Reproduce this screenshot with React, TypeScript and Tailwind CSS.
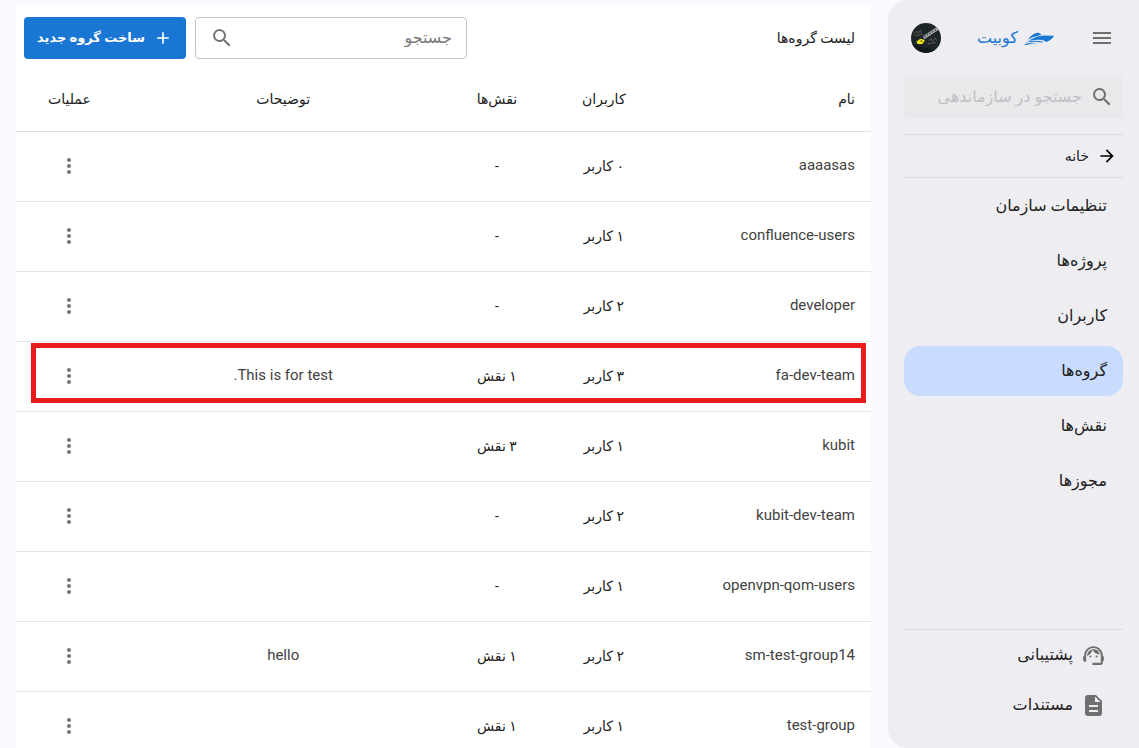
import {useState} from "react";
import {MdAdd, MdArrowForward, MdMenu, MdMoreVert, MdSearch, MdSupportAgent} from "react-icons/md";

interface Group {
  name: string;
  users: string;
  roles: string;
  description: string;
}

const groups: Group[] = [
  { name: "aaaasas", users: "۰ کاربر", roles: "-", description: "" },
  { name: "confluence-users", users: "۱ کاربر", roles: "-", description: "" },
  { name: "developer", users: "۲ کاربر", roles: "-", description: "" },
  { name: "fa-dev-team", users: "۳ کاربر", roles: "۱ نقش", description: "This is for test." },
  { name: "kubit", users: "۱ کاربر", roles: "۳ نقش", description: "" },
  { name: "kubit-dev-team", users: "۲ کاربر", roles: "-", description: "" },
  { name: "openvpn-qom-users", users: "۱ کاربر", roles: "-", description: "" },
  { name: "sm-test-group14", users: "۲ کاربر", roles: "۱ نقش", description: "hello" },
  { name: "test-group", users: "۱ کاربر", roles: "۱ نقش", description: "" },
];

const navItems = ["تنظیمات سازمان", "پروژه‌ها", "کاربران", "گروه‌ها", "نقش‌ها", "مجوزها"];

function BoatLogo() {
  return (
    <svg viewBox="0 0 88 38" className="w-[30px] h-[13px]" fill="#1976d2" aria-hidden="true">
      <path d="M11 23C17 13 24 8 32 4c8-3 13-2 19 4l-9 3C30 13 20 17 11 23z" />
      <path d="M13 26C27 16 44 11 58 10l30 1c-4 8-11 14-22 18-6-4-13-6-22-6-11 0-21 1-31 3z" />
      <path d="M3 31c16-6 35-7 56-2l-7 2C36 27 20 28 3 31z" />
      <path d="M0 37c13-6 28-7 42-4-14 0-22 1-31 4-4 1-8 1-11 0z" />
    </svg>
  );
}

function DocumentIcon() {
  return (
    <svg viewBox="0 0 25 25" className="size-[25px] text-[#6f6f6f]" fill="currentColor" fillRule="evenodd" aria-hidden="true">
      <path d="M7 2h8l6 6v12a3 3 0 0 1-3 3H7a3 3 0 0 1-3-3V5a3 3 0 0 1 3-3zM14 3.500V9h5.500zM8 12v2h9v-2zM8 17v2h9v-2z" />
    </svg>
  );
}

function Avatar() {
  return (
    <svg viewBox="0 0 90 90" className="size-[30px] rounded-full" role="img" aria-label="پروفایل">
      <rect width="90" height="90" fill="#1e2528" />
      <path d="M0 62L90 88V90H0z" fill="#14191b" />
      <path d="M36 40L78 12l5 8-43 29z" fill="#aeb2b4" />
      <path d="M40 42l40-25" stroke="#3a4144" strokeWidth="4" strokeDasharray="5 4" />
      <path d="M16 56l12-9 14 4-8 12H20z" fill="#f3ea12" />
      <path d="M25 55l6-4 5 3-5 4z" fill="#8c8a15" />
      <path d="M8 32l10-8 3 7 8-10 2 10M12 38l24-5M52 52l9-5 3 8 9-10 4 8M50 62l26-4" fill="none" stroke="#5e5555" strokeWidth="3" />
    </svg>
  );
}

function Sidebar() {
  const [active, setActive] = useState("گروه‌ها");

  return (
    <aside className="flex w-[251px] shrink-0 flex-col rounded-l-[20px] bg-[#eeedf2] px-4 pb-[18px]">
      <div className="flex h-[76px] items-center justify-between pr-[9px] pl-[7px]">
        <button type="button" aria-label="منو" className="text-[#6f6f6f]"><MdMenu size={24} /></button>
        <a href="#" className="flex items-center gap-1.5 text-base text-[#1976d2]">
          <BoatLogo />
          کوبیت
        </a>
        <Avatar />
      </div>

      <div className="flex h-[42px] items-center gap-2 rounded bg-[#e9e9eb] px-[9px]">
        <MdSearch size={24} className="shrink-0 text-[#6f6f6f]" />
        <input
          type="text"
          aria-label="جستجو در سازماندهی"
          placeholder="جستجو در سازماندهی"
          className="w-full min-w-0 bg-transparent text-base outline-none placeholder:text-[#c0c0c3]"
        />
      </div>

      <a href="#" className="mt-4 flex h-11 items-center gap-2 border-y border-[#d9d8de] px-1.5 text-sm text-[#212121]">
        <MdArrowForward size={20} className="text-black" />
        خانه
      </a>

      <nav className="mt-[3px] flex flex-col gap-[5px]">
        {navItems.map((item) => (
          <a
            key={item}
            href="#"
            onClick={() => setActive(item)}
            className={`flex h-[50px] items-center rounded-2xl px-4 text-base text-[#212121] ${active === item ? "bg-[#c9dbff]" : ""}`}
          >
            {item}
          </a>
        ))}
      </nav>

      {/* Bottom links */}
      <div className="mt-auto border-t border-[#d9d8de] text-base text-[#212121]">
        <a href="#" className="flex h-[50px] items-center gap-2 px-[17px]">
          <MdSupportAgent size={25} className="text-[#6f6f6f]" />
          پشتیبانی
        </a>
        <a href="#" className="flex h-[50px] items-center gap-2 px-[17px]">
          <DocumentIcon />
          مستندات
        </a>
      </div>
    </aside>
  );
}

function GroupRow({ group, highlighted }: { group: Group; highlighted: boolean }) {
  return (
    <tr className="relative h-[70px] border-b border-[#e4e4e4]">
      <td className="px-4 text-right text-[15px] text-[#424242]">
        {group.name}
        {highlighted && (
          <span className="pointer-events-none absolute top-[2px] right-[5px] bottom-[7px] left-[15px] border-[5px] border-[#e81c1c]" />
        )}
      </td>
      <td>{group.users}</td>
      <td>{group.roles}</td>
      <td className="text-[15px] text-[#424242]">{group.description}</td>
      <td>
        <button type="button" aria-label="عملیات" className="align-middle text-[#757575]"><MdMoreVert size={24} /></button>
      </td>
    </tr>
  );
}

function App() {
  const [selected] = useState("fa-dev-team");

  return (
    <div dir="rtl" className="flex h-screen overflow-hidden bg-[#f9f9fe] font-[Roboto,'DejaVu_Sans',sans-serif]">
      <Sidebar />
      <main className="min-w-0 flex-1 pt-[5px] pr-[17px] pl-4">
        <div className="rounded bg-white">
          <div className="flex items-center gap-[9px] pt-3 pr-4 pl-2">
            <h1 className="ml-auto text-sm text-[#212121]">لیست گروه‌ها</h1>
            <div className="flex h-[42px] w-[272px] items-center rounded border border-[#c4c4c4] px-3.5">
              <input
                type="text"
                aria-label="جستجو"
                placeholder="جستجو"
                className="w-full min-w-0 bg-transparent text-base outline-none placeholder:text-[#7a7a7a]"
              />
              <MdSearch size={24} className="shrink-0 text-[#757575]" />
            </div>
            <button type="button" className="flex h-[42px] w-[162px] items-center justify-center gap-2 rounded bg-[#1976d2] text-[13px] font-bold text-white">
              <MdAdd size={20} />
              ساخت گروه جدید
            </button>
          </div>

          <table className="mt-2 w-full table-fixed border-collapse text-center text-sm text-[#212121]">
            <thead>
              <tr className="h-16 border-b border-[#e0e0e0]">
                <th className="w-[25%] px-4 text-right font-normal">نام</th>
                <th className="w-[12.5%] font-normal">کاربران</th>
                <th className="w-[12.5%] font-normal">نقش‌ها</th>
                <th className="w-[37.5%] font-normal">توضیحات</th>
                <th className="w-[12.5%] font-normal">عملیات</th>
              </tr>
            </thead>
            <tbody>
              {groups.map((group) => (
                <GroupRow key={group.name} group={group} highlighted={group.name === selected} />
              ))}
            </tbody>
          </table>
        </div>
      </main>
    </div>
  );
}

export default App;
